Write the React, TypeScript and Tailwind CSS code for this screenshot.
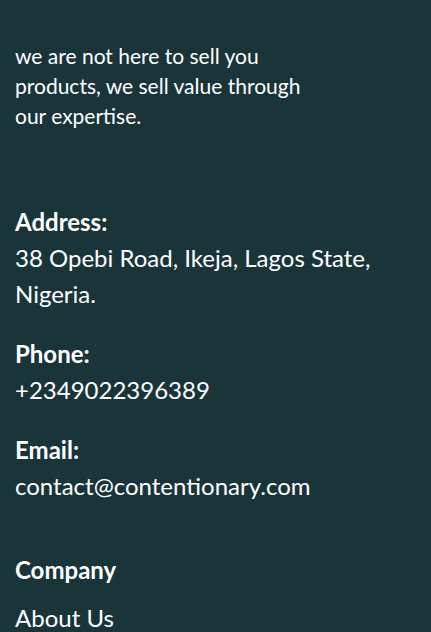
export default function App() {
  return (
    <div className="min-h-screen bg-[#1a353a] px-[15px] pt-[41px] text-white font-['Lato','Open_Sans',sans-serif]">
      <p className="max-w-[310px] text-[21px] leading-[30px]">
        we are not here to sell you products, we sell value through our expertise.
      </p>

      <div className="mt-[73px] flex flex-col gap-6 text-[24px] leading-[36px]">
        <div>
          <h4 className="font-bold">Address:</h4>
          <p>38 Opebi Road, Ikeja, Lagos State, Nigeria.</p>
        </div>
        <div>
          <h4 className="font-bold">Phone:</h4>
          <p>+2349022396389</p>
        </div>
        <div>
          <h4 className="font-bold">Email:</h4>
          <p>contact@contentionary.com</p>
        </div>
      </div>

      <div className="mt-12 text-[24px] leading-[36px]">
        <h4 className="font-bold">Company</h4>
        <ul className="mt-3">
          <li>About Us</li>
        </ul>
      </div>
    </div>
  );
}
